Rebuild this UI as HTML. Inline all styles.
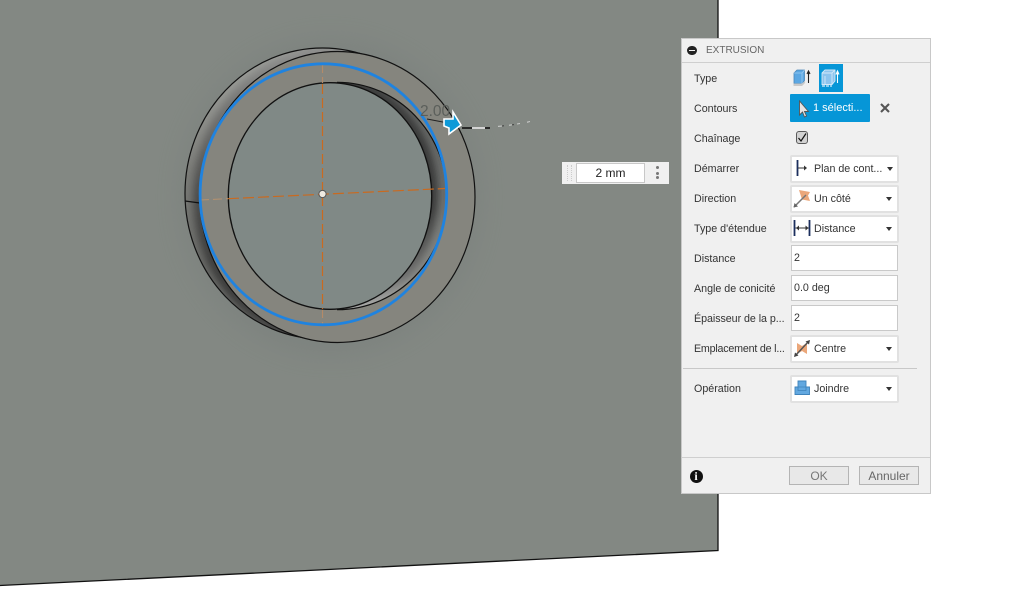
<!DOCTYPE html>
<html><head><meta charset="utf-8">
<style>
html,body{margin:0;padding:0;background:#fff}
body{width:1016px;height:592px;position:relative;overflow:hidden;font-family:"Liberation Sans",sans-serif;font-size:11px;color:#333}
.a{position:absolute}
.panel{left:681px;top:38px;width:248px;height:454px;background:#f0f0f0;border:1px solid #c8c8c8}
.lab{position:absolute;left:694px;height:14px;line-height:14px;white-space:nowrap;color:#333;font-size:10.7px}
.dd{position:absolute;left:790px;width:105px;height:24px;background:#fff;border:2px solid #e1e1e1;border-radius:2px}
.dd span{position:absolute;left:22px;top:0;line-height:24px;white-space:nowrap;color:#333;font-size:10.7px}
.dd i{position:absolute;left:94px;top:10px;width:0;height:0;border:3.5px solid transparent;border-top:4px solid #333;border-bottom:0}
.dd svg{position:absolute;left:0;top:0}
.inp{position:absolute;left:791px;width:103px;height:24px;background:#fff;border:1px solid #c9c9c9;line-height:24px;padding-left:2px;color:#333;font-size:10.7px}
.btn{position:absolute;top:466px;width:58px;height:17px;background:#e8e8e8;border:1px solid #b4b4b4;text-align:center;line-height:18px;font-size:12px;color:#777}
</style></head><body>
<svg class="a" style="left:0;top:0" width="1016" height="592" viewBox="0 0 1016 592">
<defs>
<filter id="b12" x="-40%" y="-40%" width="180%" height="180%"><feGaussianBlur stdDeviation="12"/></filter>
<filter id="b4" x="-30%" y="-30%" width="160%" height="160%"><feGaussianBlur stdDeviation="4"/></filter>
<linearGradient id="cres" x1="0" y1="0" x2="0.3" y2="1">
<stop offset="0" stop-color="#acaea9"/><stop offset=".4" stop-color="#7b7c78"/><stop offset=".7" stop-color="#6a6b68"/><stop offset="1" stop-color="#7a7b77"/></linearGradient>
<linearGradient id="wall" x1="0" y1="0" x2="0" y2="1">
<stop offset="0" stop-color="#5f6160"/><stop offset=".5" stop-color="#6d6f6d"/><stop offset=".85" stop-color="#8a8c88"/><stop offset="1" stop-color="#b8bab6"/></linearGradient>
<linearGradient id="dk" x1="0" y1="0" x2="0" y2="1">
<stop offset="0" stop-color="#2e2e2e"/><stop offset=".55" stop-color="#2a2a2a"/><stop offset=".85" stop-color="#666"/><stop offset="1" stop-color="#aaa"/></linearGradient>
<linearGradient id="dk2" x1="0" y1="0" x2="0" y2="1">
<stop offset="0" stop-color="#888"/><stop offset=".5" stop-color="#3a3a3a"/><stop offset=".8" stop-color="#2a2a2a"/><stop offset="1" stop-color="#333"/></linearGradient>
<clipPath id="pl"><polygon points="0,0 718,0 718,550 0,586"/></clipPath>
<clipPath id="hc"><ellipse cx="337.5" cy="196" rx="109.5" ry="113.7"/></clipPath>
<clipPath id="bc"><ellipse cx="322.5" cy="193.500" rx="137.500" ry="145.500"/></clipPath>
</defs>
<polygon points="0,0 718,0 718,550.5 0,585.5" fill="#838883"/>
<g clip-path="url(#pl)"><ellipse cx="330" cy="197" rx="150" ry="158" fill="#747b79" opacity=".4" filter="url(#b12)"/></g>
<path d="M718 0V550.5L0 585.5" fill="none" stroke="#111" stroke-width="1.3"/>
<!-- back ring -->
<ellipse cx="322.5" cy="193.5" rx="137.5" ry="145.5" fill="url(#cres)"/>
<g clip-path="url(#bc)"><ellipse cx="337.5" cy="197" rx="137.5" ry="145.5" fill="none" stroke="url(#dk2)" stroke-width="14" opacity=".75" filter="url(#b4)"/></g>
<ellipse cx="322.5" cy="193.5" rx="137.5" ry="145.5" fill="none" stroke="#111" stroke-width="1.2"/>
<!-- front face -->
<ellipse cx="337.5" cy="197" rx="137.5" ry="145.5" fill="#85857e" stroke="#111" stroke-width="1.2"/>
<ellipse cx="337.5" cy="196" rx="109.5" ry="113.7" fill="url(#wall)"/>
<g clip-path="url(#hc)"><ellipse cx="330" cy="196" rx="101.7" ry="113.3" fill="none" stroke="url(#dk)" stroke-width="12" opacity=".8" filter="url(#b4)"/></g>
<ellipse cx="330" cy="196" rx="102" ry="113.5" fill="#808986"/>
<path d="M337 82.3C398 82.3 447 133 447 196S398 309.7 337 309.7" fill="none" stroke="#111" stroke-width="1.2"/>
<ellipse cx="330" cy="196" rx="101.7" ry="113.3" fill="none" stroke="#111" stroke-width="1.3"/>
<path d="M185 201L200 203" stroke="#111" stroke-width="1.2"/>
<!-- centre lines -->
<path d="M322.5 65V83M322.5 310V325" stroke="#b48a68" stroke-width="1.1" stroke-dasharray="8 4"/>
<path d="M322.5 84V309" stroke="#c96a20" stroke-width="1.2" stroke-dasharray="10 4"/>
<path d="M200 200L228 198.700" stroke="#b09070" stroke-width="1.1" stroke-dasharray="9 4"/>
<path d="M228 198.700L445 188.500" stroke="#c96a20" stroke-width="1.2" stroke-dasharray="11 4"/>
<!-- blue profile -->
<ellipse cx="323.4" cy="194.3" rx="123.3" ry="130.5" fill="none" stroke="#1f83e0" stroke-width="2.8"/>
<circle cx="322.5" cy="194" r="3.6" fill="#efeae2" stroke="#555" stroke-width="1"/>
<!-- dimension -->
<text x="420" y="116" font-family="Liberation Sans,sans-serif" font-size="15.5" fill="#5b5f5b">2.00</text>
<path d="M427 119L446 122.6" stroke="#222" stroke-width="1"/>
<polygon points="444,119 453,119 453,112 461,125 449,134 449,128 444,126" fill="#0e9ad8" stroke="#fff" stroke-width="1.6" stroke-linejoin="miter"/>
<path d="M462 128H472" stroke="#111" stroke-width="1.6"/><path d="M472 128H485" stroke="#e8e8e8" stroke-width="1.6"/><path d="M485 128H490" stroke="#111" stroke-width="1.6"/>
<path d="M498 126.3l4-.3M509 125.2l3-.3M517 124l3-.4M527 122.2l3-.6" stroke="#e0e0e0" stroke-width=".8"/><path d="M502 126l2-.2M512 124.9l2-.2" stroke="#333" stroke-width=".8"/>
</svg>

<!-- floating value box -->
<div class="a" style="left:562px;top:162px;width:107px;height:22px;background:#f0f0f0"></div>
<div class="a" style="left:567px;top:165px;width:5px;height:16px;border-left:1px dotted #ccc;border-right:1px dotted #ccc;box-sizing:border-box"></div>
<div class="a" style="left:576px;top:163px;width:67px;height:18px;background:#fff;border:1px solid #c8c8c8;text-align:center;line-height:19px;font-size:12px;color:#222">2 mm</div>
<div class="a" style="left:656px;top:166px;width:3px;height:3px;border-radius:50%;background:#777"></div>
<div class="a" style="left:656px;top:171.5px;width:3px;height:3px;border-radius:50%;background:#777"></div>
<div class="a" style="left:656px;top:176px;width:3px;height:3px;border-radius:50%;background:#777"></div>

<!-- panel -->
<div class="a panel"></div>
<div class="a" style="left:682px;top:62px;width:248px;height:1px;background:#cfcfcf"></div>
<div class="a" style="left:682px;top:457px;width:248px;height:1px;background:#cfcfcf"></div>
<div class="a" style="left:683px;top:368px;width:234px;height:1px;background:#c8c8c8"></div>
<div class="a" style="left:687px;top:45.500px;width:9.500px;height:9.500px;border-radius:50%;background:#222"></div>
<div class="a" style="left:689px;top:50px;width:5.500px;height:1px;background:#f0f0f0"></div>
<div class="a" style="left:706px;top:44px;line-height:14px;font-size:10px;color:#666">EXTRUSION</div>

<div class="lab" style="top:72px">Type</div>
<div class="lab" style="top:102px">Contours</div>
<div class="lab" style="top:132px">Chaînage</div>
<div class="lab" style="top:162px">Démarrer</div>
<div class="lab" style="top:192px">Direction</div>
<div class="lab" style="top:222px">Type d'étendue</div>
<div class="lab" style="top:252px">Distance</div>
<div class="lab" style="top:282px">Angle de conicité</div>
<div class="lab" style="top:312px;letter-spacing:-.05px">Épaisseur de la p...</div>
<div class="lab" style="top:342px;letter-spacing:-.2px">Emplacement de l...</div>
<div class="lab" style="top:382px">Opération</div>

<!-- type icons -->
<svg class="a" style="left:792px;top:67px" width="20" height="22" viewBox="0 0 20 22">
<path d="M2 6L5 3H12.500V13.500L10 16.500H2Z" fill="#5ba7e3" stroke="#4a86b8" stroke-width=".8"/>
<path d="M2 6H10V16.500M10 6L12.500 3" fill="none" stroke="#9fcdf0" stroke-width=".8"/>
<path d="M1.500 16.500H10L13 14V16L10 19H1.500Z" fill="#c9c9c9"/>
<path d="M16.500 16V5M15 7L16.500 4L18 7" fill="none" stroke="#222" stroke-width="1.100"/>
</svg>
<div class="a" style="left:819px;top:64px;width:24px;height:28px;background:#0696d7"></div>
<svg class="a" style="left:820px;top:67px" width="22" height="22" viewBox="0 0 22 22">
<path d="M2 6L5 3H15V14L12 17.500H2Z" fill="#8cc4ee" stroke="#d3e9f8" stroke-width=".9"/>
<path d="M5 17.500V9M2 6H12V17.500M12 6L15 3" fill="none" stroke="#d3e9f8" stroke-width=".9"/>
<path d="M2 19H12" stroke="#d9eefb" stroke-width="1.200" stroke-dasharray="3 1"/>
<path d="M17.500 16V5M16 7.500L17.500 4L19 7.500" fill="none" stroke="#fff" stroke-width="1.100"/>
</svg>

<!-- contours -->
<div class="a" style="left:790px;top:94px;width:80px;height:28px;background:#0696d7;border-radius:1px"></div>
<svg class="a" style="left:796px;top:99px" width="14" height="20" viewBox="0 0 14 20"><path d="M3.500 2V16L6.500 13L8.500 18L10.500 17L8.500 12.500H12.500Z" fill="#e4e4e4" stroke="#555" stroke-width=".9"/></svg>
<div class="a" style="left:813px;top:101px;line-height:14px;font-size:11px;color:#fff;white-space:nowrap">1 sélecti...</div>
<svg class="a" style="left:879px;top:102px" width="12" height="12" viewBox="0 0 12 12"><path d="M2 2L10 10M10 2L2 10" stroke="#555" stroke-width="2.100"/></svg>

<!-- checkbox -->
<div class="a" style="left:795.500px;top:131px;width:10.500px;height:10.500px;background:#d2d2d2;border:1.500px solid #5a5a5a;border-radius:3px"></div>
<svg class="a" style="left:795px;top:130px" width="14" height="15" viewBox="0 0 14 15"><path d="M3.500 8L6 11L11 3.500" fill="none" stroke="#111" stroke-width="1.200"/></svg>

<!-- dropdowns -->
<div class="dd" style="top:155px"><svg width="22" height="24" viewBox="0 0 22 24"><path d="M5.500 3V19" stroke="#1c2f5e" stroke-width="1.800"/><path d="M6 11H13" stroke="#333" stroke-width="1"/><path d="M12 8.500L15 11L12 13.500Z" fill="#333"/></svg><span>Plan de cont...</span><i style="left:95px"></i></div>
<div class="dd" style="top:185px"><svg width="22" height="24" viewBox="0 0 22 24"><path d="M7 3L18 5L16 8.500L18 14L10 12.500Z" fill="#eba77a"/><path d="M2 20L14 8" stroke="#777" stroke-width="1.500"/><path d="M1.500 20.500L2.500 16L6 19.500Z" fill="#666"/></svg><span>Un côté</span><i></i></div>
<div class="dd" style="top:215px"><svg width="22" height="24" viewBox="0 0 22 24"><path d="M2.500 3V19M17.500 3V19" stroke="#1c2f5e" stroke-width="1.800"/><path d="M3.500 11H16.500" stroke="#333" stroke-width="1"/><path d="M7 8.500L4 11L7 13.500ZM13.500 8.500L16.500 11L13.500 13.500Z" fill="#333"/></svg><span>Distance</span><i></i></div>
<div class="inp" style="top:245px">2</div>
<div class="inp" style="top:275px">0.0 deg</div>
<div class="inp" style="top:305px">2</div>
<div class="dd" style="top:335px"><svg width="22" height="24" viewBox="0 0 22 24"><path d="M5 6L10 9L15 6V17L10 14L5 17Z" fill="#eba77a"/><path d="M3 19L17 4" stroke="#555" stroke-width="1.500"/><path d="M18 3L17 7.500L13.500 4.500ZM2 20L3 15.500L6.500 18.500Z" fill="#444"/></svg><span>Centre</span><i></i></div>
<div class="dd" style="top:375px"><svg width="22" height="24" viewBox="0 0 22 24"><path d="M6 4H14V10H17.500V17.500H3V10H6Z" fill="#62a8e0" stroke="#3f83bb" stroke-width=".9"/><path d="M6 10H14V13.500H6Z" fill="none" stroke="#3f83bb" stroke-width=".8"/></svg><span>Joindre</span><i></i></div>

<!-- footer -->
<div class="a" style="left:689.500px;top:469.500px;width:13px;height:13px;border-radius:50%;background:#111;color:#fff;text-align:center;line-height:13px;font-family:'Liberation Serif',serif;font-weight:bold;font-size:12px">i</div>
<div class="btn" style="left:789px">OK</div>
<div class="btn" style="left:859px;color:#666">Annuler</div>
</body></html>
